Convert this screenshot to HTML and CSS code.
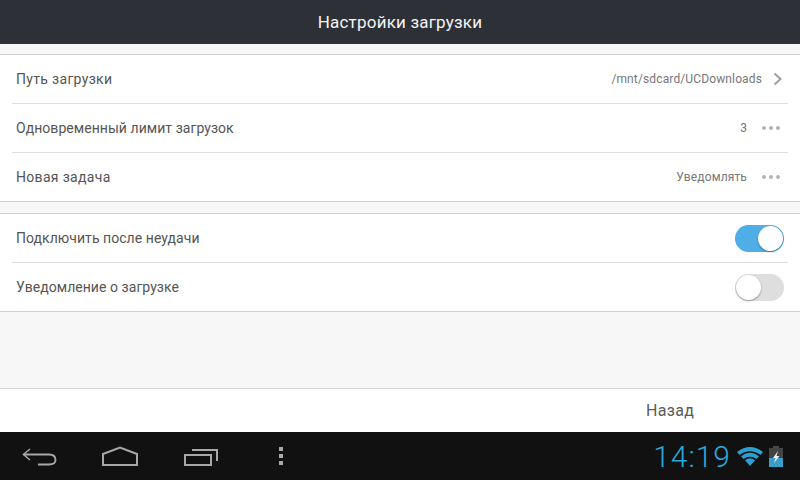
FILE: index.html
```html
<!DOCTYPE html>
<html lang="ru">
<head>
  <meta charset="UTF-8">
  <title>Настройки загрузки</title>
  <link rel="stylesheet" href="styles.css">
</head>
<body>

<div class="screen">
  <div class="title-bar">Настройки загрузки</div>

  <div class="content">
    <div class="group">
      <div class="row">
        <span class="row-label wide">Путь загрузки</span>
        <span class="row-value">/mnt/sdcard/UCDownloads</span>
        <svg class="chevron" width="10" height="14" viewBox="0 0 10 14">
          <path d="M1.5 1.5 L7.5 7 L1.5 12.5" fill="none" stroke="#a0a0a0" stroke-width="2"/>
        </svg>
      </div>
      <div class="row">
        <span class="row-label">Одновременный лимит загрузок</span>
        <span class="row-value">3</span>
        <span class="dots"><i></i><i></i><i></i></span>
      </div>
      <div class="row">
        <span class="row-label wide">Новая задача</span>
        <span class="row-value">Уведомлять</span>
        <span class="dots"><i></i><i></i><i></i></span>
      </div>
    </div>

    <div class="group">
      <div class="row">
        <span class="row-label">Подключить после неудачи</span>
        <span class="switch on"><span class="knob"></span></span>
      </div>
      <div class="row">
        <span class="row-label">Уведомление о загрузке</span>
        <span class="switch"><span class="knob"></span></span>
      </div>
    </div>
  </div>

  <div class="footer">
    <span class="back-btn">Назад</span>
  </div>

  <div class="nav-bar">
    <div class="nav-keys">
      <svg width="36" height="20" viewBox="0 0 36 20">
        <path d="M1.5 8.5 H27 Q33.5 8.5 33.5 14 Q33.5 18.5 27 18.5 H16" fill="none" stroke="#a8a8a8" stroke-width="1.8"/>
        <path d="M8 3 L1.5 8.5 L8 14" fill="none" stroke="#a8a8a8" stroke-width="1.5"/>
      </svg>
      <svg width="38" height="20" viewBox="0 0 38 20">
        <path d="M1 19 V8 L18 1.5 L35 8 V19 Z" fill="none" stroke="#a8a8a8" stroke-width="2"/>
      </svg>
      <svg width="35" height="20" viewBox="0 0 35 20">
        <rect x="1" y="9" width="26" height="10" fill="none" stroke="#a8a8a8" stroke-width="2"/>
        <path d="M8 4 H33 V15" fill="none" stroke="#a8a8a8" stroke-width="2"/>
      </svg>
      <span class="menu-dots"><i></i><i></i><i></i></span>
    </div>
    <div class="status">
      <span class="clock">14:19</span>
      <svg width="26" height="20" viewBox="0 0 26 20">
        <path d="M0 6 Q13 -4 26 6 L23.5 9 Q13 1.5 2.5 9 Z" fill="#2a9fd0"/>
        <path d="M4 10.2 Q13 3.5 22 10.2 L19.5 13 Q13 8.5 6.5 13 Z" fill="#2a9fd0"/>
        <path d="M8 14.2 Q13 10.5 18 14.2 L13 20 Z" fill="#2a9fd0"/>
      </svg>
      <svg width="14" height="21" viewBox="0 0 14 21">
        <rect x="4" y="0" width="6" height="2" fill="#4a4a4a"/>
        <rect x="0" y="2" width="14" height="19" fill="#444"/>
        <rect x="0" y="12" width="14" height="9" fill="#3a9fc8"/>
        <path d="M9 5 L4 12 H6.5 L5 17 L10.5 10 H7.5 Z" fill="#f2f2f2"/>
      </svg>
    </div>
  </div>
</div>

</body>
</html>
```

FILE: styles.css
```css
html, body {
  margin: 0;
  padding: 0;
}
body {
  font-family: Roboto, "Liberation Sans", sans-serif;
  width: 800px;
  height: 480px;
  overflow: hidden;
}
.screen {
  display: flex;
  flex-direction: column;
  height: 480px;
  background: #f7f7f7;
}
.title-bar {
  height: 44px;
  line-height: 44px;
  background: #2e3038;
  color: #f4f4f4;
  font-size: 17px;
  text-align: center;
  letter-spacing: 0.2px;
}
.content {
  flex: 1;
  padding-top: 10px;
}
.group {
  background: #fff;
  border-top: 1px solid #cfcfcf;
  border-bottom: 1px solid #cfcfcf;
  margin-bottom: 11px;
  padding: 0 12px;
}
.row {
  display: flex;
  align-items: center;
  height: 48px;
  padding: 0 4px;
  border-bottom: 1px solid #dedede;
}
.row:last-child {
  border-bottom: none;
}
.row-label {
  flex: 1;
  font-size: 14px;
  color: #555;
  letter-spacing: 0.05px;
}
.row-label.wide {
  letter-spacing: 0.32px;
}
.row-value {
  font-size: 12px;
  color: #777;
  letter-spacing: 0.13px;
}
.chevron {
  margin: 0 1px 0 11px;
}
.dots {
  display: flex;
  gap: 3px;
  margin: 0 4px 0 15px;
}
.dots i {
  width: 4px;
  height: 4px;
  border-radius: 50%;
  background: #b4b4b4;
}
.switch {
  display: flex;
  width: 49px;
  height: 27px;
  border-radius: 14px;
  background: #dedede;
}
.switch.on {
  background: #4faee6;
  justify-content: flex-end;
}
.knob {
  width: 25px;
  height: 25px;
  margin: 1px;
  border-radius: 50%;
  background: #fff;
  box-shadow: 0 1px 2px rgba(0,0,0,0.35);
}
.footer {
  display: flex;
  height: 43px;
  background: #fff;
  border-top: 1px solid #d8d8d8;
  align-items: center;
}
.back-btn {
  margin-left: 646px;
  font-size: 16px;
  color: #5a5a5a;
  letter-spacing: 0.3px;
}
.nav-bar {
  display: flex;
  justify-content: space-between;
  align-items: center;
  height: 48px;
  background: #111;
}
.nav-keys {
  display: flex;
  align-items: center;
  gap: 44px;
  padding-left: 22px;
}
.menu-dots {
  display: flex;
  flex-direction: column;
  gap: 3px;
  margin-left: 16px;
}
.menu-dots i {
  width: 4px;
  height: 4px;
  background: #a8a8a8;
}
.status {
  display: flex;
  align-items: center;
  gap: 6px;
  padding-right: 17px;
}
.clock {
  font-size: 30px;
  font-weight: 300;
  color: #2aa8dc;
  letter-spacing: 1px;
}
```
